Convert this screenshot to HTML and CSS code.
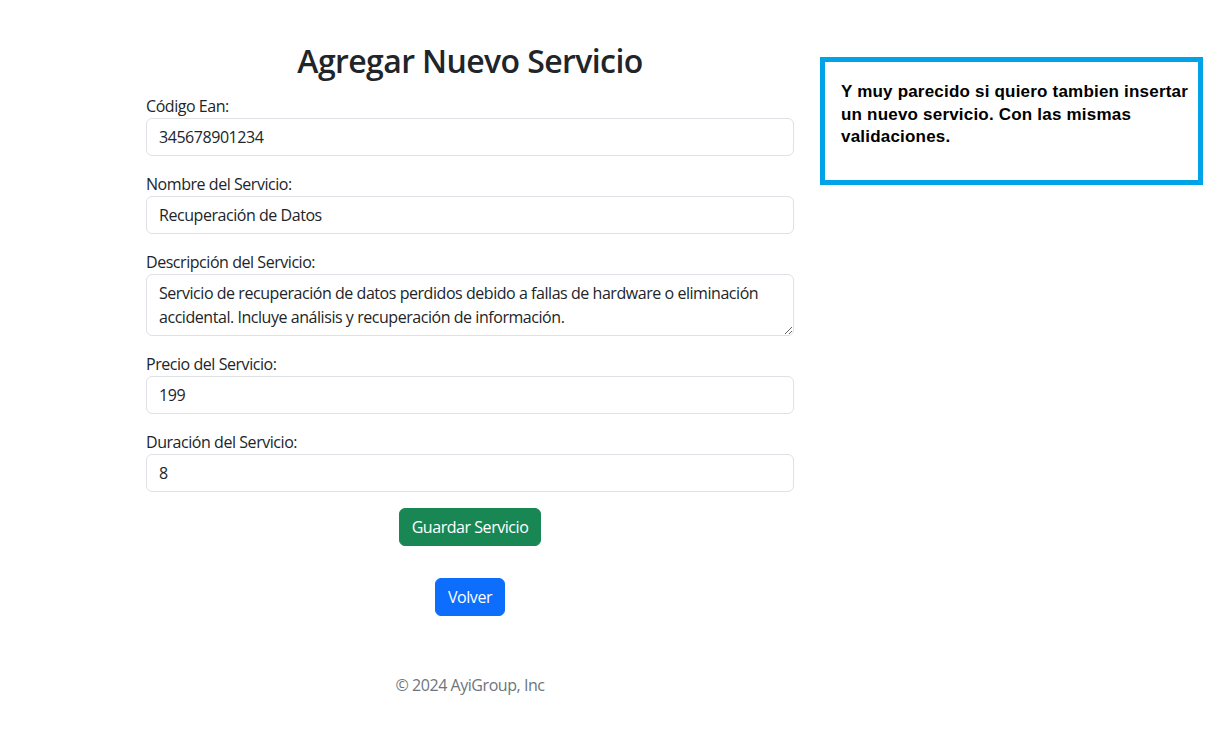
FILE: index.html
```html
<!DOCTYPE html>
<html lang="es">
<head>
<meta charset="utf-8">
<title>Agregar Nuevo Servicio</title>
<link rel="stylesheet" href="styles.css">
</head>
<body>
<main class="page">
  <section class="form-col">
    <h2 class="title">Agregar Nuevo Servicio</h2>
    <form class="form">
      <div class="group">
        <label class="label">Código Ean:</label>
        <input class="control" type="text" value="345678901234">
      </div>
      <div class="group">
        <label class="label">Nombre del Servicio:</label>
        <input class="control" type="text" value="Recuperación de Datos">
      </div>
      <div class="group">
        <label class="label">Descripción del Servicio:</label>
        <textarea class="control area" rows="2">Servicio de recuperación de datos perdidos debido a fallas de hardware o eliminación accidental. Incluye análisis y recuperación de información.</textarea>
      </div>
      <div class="group">
        <label class="label">Precio del Servicio:</label>
        <input class="control" type="text" value="199">
      </div>
      <div class="group">
        <label class="label">Duración del Servicio:</label>
        <input class="control" type="text" value="8">
      </div>
      <div class="actions">
        <button type="button" class="btn btn-success">Guardar Servicio</button>
      </div>
    </form>
    <div class="back">
      <button type="button" class="btn btn-primary">Volver</button>
    </div>
    <footer class="footer">© 2024 AyiGroup, Inc</footer>
  </section>
  <aside class="note">
    Y muy parecido si quiero tambien insertar un nuevo servicio. Con las mismas validaciones.
  </aside>
</main>
</body>
</html>
```

FILE: styles.css
```css
* { box-sizing: border-box; }
html, body { margin: 0; padding: 0; background: #fff; }
body {
  font-family: "Open Sans", "Noto Sans", "Liberation Sans", sans-serif;
  color: #212529;
  font-size: 16px;
  line-height: 1.5;
  letter-spacing: -0.45px;
}
.page {
  position: relative;
  width: 1209px;
  min-height: 739px;
  padding: 40px 0 0 146px;
}
.form-col {
  width: 648px;
}
.title {
  margin: 0 0 14px;
  text-align: center;
  font-size: 32px;
  font-weight: 600;
  line-height: 1.2;
  padding-top: 2px;
  letter-spacing: -0.6px;
}
.form { display: flex; flex-direction: column; }
.group { display: flex; flex-direction: column; margin-bottom: 16px; }
.label { display: block; font-size: 16px; line-height: 24px; height: 24px; }
.control {
  display: block;
  width: 100%;
  height: 38px;
  padding: 6px 12px;
  font: inherit;
  font-size: 16px;
  line-height: 24px;
  letter-spacing: -0.45px;
  color: #212529;
  background: #fff;
  border: 1px solid #dee2e6;
  border-radius: 6px;
  outline: none;
}
.area {
  height: 62px;
  resize: vertical;
  overflow: hidden;
}
.actions { display: flex; justify-content: center; }
.back { display: flex; justify-content: center; margin-top: 32px; }
.btn {
  font: inherit;
  font-size: 16px;
  line-height: 24px;
  letter-spacing: -0.45px;
  padding: 6px 12px;
  border-radius: 6px;
  color: #fff;
  border: 1px solid transparent;
  cursor: pointer;
}
.btn-success { background: #198754; border-color: #198754; }
.btn-primary { background: #0d6efd; border-color: #0d6efd; }
.footer {
  margin-top: 57px;
  text-align: center;
  color: #6c757d;
  line-height: 24px;
}
.note {
  position: absolute;
  left: 820px;
  top: 57px;
  width: 383px;
  height: 128px;
  border: 5px solid #00a2e8;
  padding: 19px 2px 0 16px;
  font-family: "Liberation Sans", Arial, sans-serif;
  font-weight: bold;
  font-size: 17px;
  line-height: 22.5px;
  letter-spacing: 0.2px;
  color: #000;
}
```
